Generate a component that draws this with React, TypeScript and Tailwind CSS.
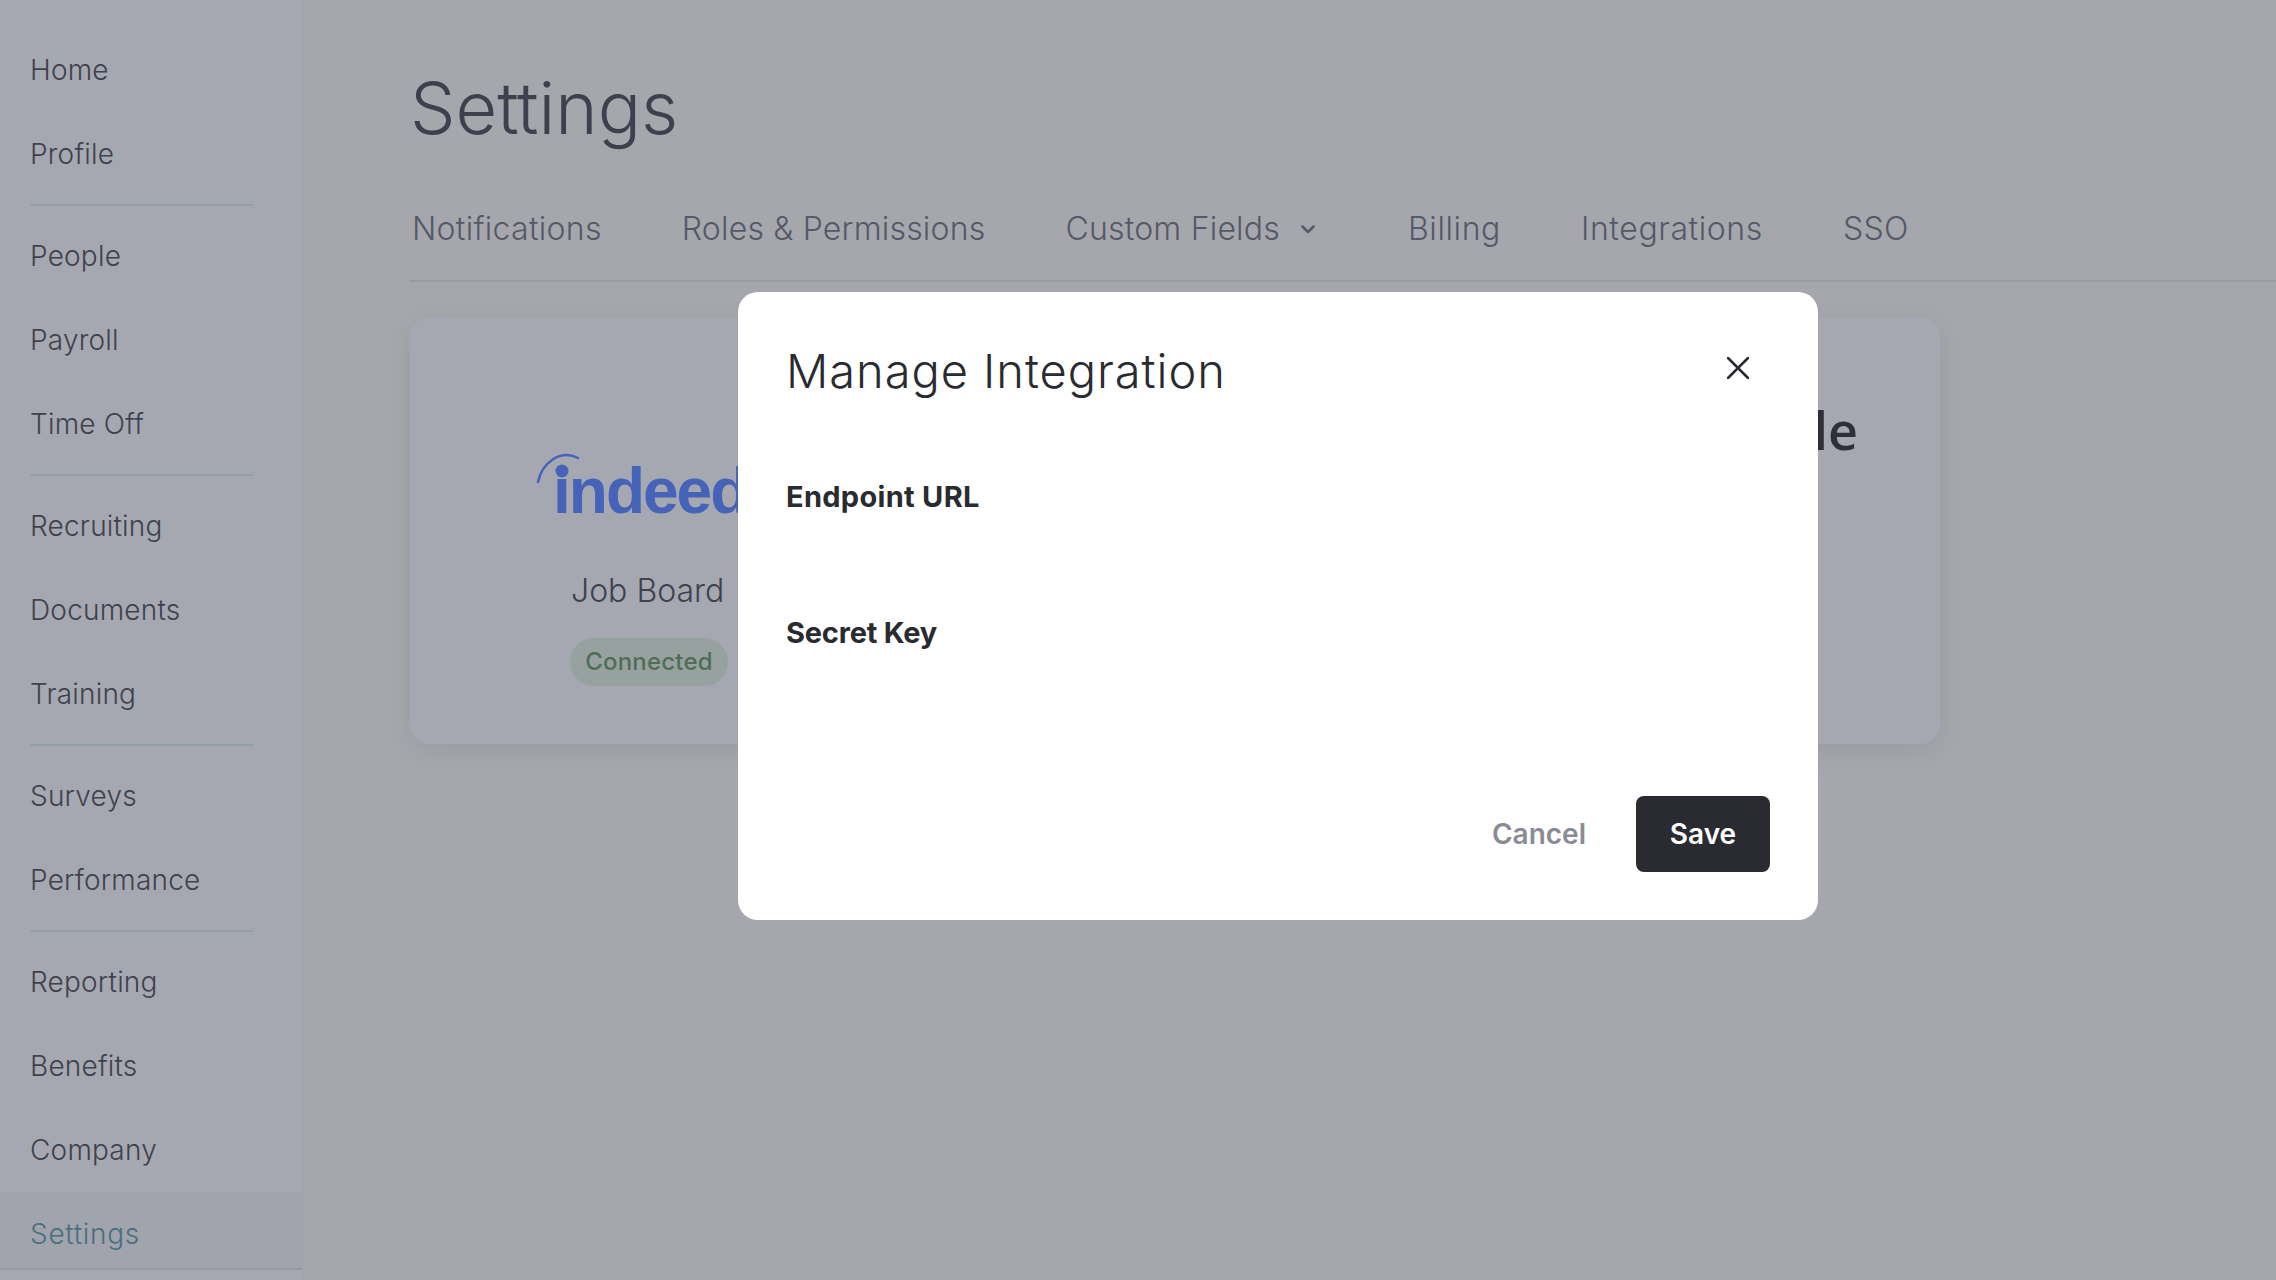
const navGroups = [
  ["Home", "Profile"],
  ["People", "Payroll", "Time Off"],
  ["Recruiting", "Documents", "Training"],
  ["Surveys", "Performance"],
  ["Reporting", "Benefits", "Company"],
];

const tabs = [
  { label: "Notifications", spacing: "tracking-[0.3px]" },
  { label: "Roles & Permissions", spacing: "tracking-[0.2px]" },
  { label: "Custom Fields", spacing: "tracking-[0.2px]" },
  { label: "Billing", spacing: "tracking-[0.6px]" },
  { label: "Integrations", spacing: "tracking-[0.6px]" },
  { label: "SSO", spacing: "tracking-[0.3px]" },
];

function Sidebar() {
  return (
    <aside className="w-[303px] shrink-0 h-full bg-[#a5a8b1] border-r border-[#a1a3a9] pt-[28px]">
      {navGroups.map((group, i) => (
        <div key={group[0]}>
          {group.map((label) => (
            <div key={label} className="h-[84px] flex items-center pl-[30px] text-[28px] tracking-[0.2px] font-light text-[#3f424d]">
              {label}
            </div>
          ))}
          {i < navGroups.length - 1 && <div className="ml-[30px] w-[224px] h-[2px] my-[8px] bg-[#96a1a7]" />}
        </div>
      ))}
      <div className="h-[78px] border-b-2 border-[#979aa4] bg-[#a1a4ac] pl-[30px] pt-[21px] leading-[42px] text-[28px] tracking-[0.7px] font-light text-[#48707e]">
        Settings
      </div>
    </aside>
  );
}

function Tabs() {
  return (
    <div className="h-[77px] pl-[2px] border-b-2 border-[#9a9ba0] flex items-start gap-[80px] text-[32px] font-light text-[#555967]">
      {tabs.map((tab) => (
        <div key={tab.label} className={`flex items-center leading-[48px] whitespace-nowrap ${tab.spacing}`}>
          {tab.label}
          {tab.label === "Custom Fields" && (
            <svg className="ml-[20px] mr-[12px]" width="16" height="16" viewBox="0 0 16 16" fill="none" stroke="#555967" strokeWidth="2.5" strokeLinecap="round" strokeLinejoin="round">
              <path d="M2.5 5.5 8 11l5.5-5.5" />
            </svg>
          )}
        </div>
      ))}
    </div>
  );
}

function IndeedLogo() {
  return (
    <div className="relative h-[72px] w-[260px]">
      <span className="absolute left-[15px] top-[-7px] text-[64px] leading-[90px] tracking-[-2px] font-bold text-[#4563b8] [font-family:'Liberation_Sans',sans-serif]">
        indeed
      </span>
      <svg className="absolute left-[-2px] top-[-4px]" width="50" height="40" viewBox="0 0 50 40" fill="none">
        <path d="M2 33C6 14 24 0 42 9" stroke="#4563b8" strokeWidth="2.5" strokeLinecap="round" />
        <circle cx="26" cy="22" r="6.5" fill="#4563b8" />
      </svg>
    </div>
  );
}

function IntegrationCard() {
  return (
    <div className="mt-[35px] h-[427px] w-[1530px] rounded-[20px] bg-[#a5a8b1] shadow-[0_6px_28px_rgba(0,0,0,0.07)] flex justify-between overflow-hidden">
      <div className="ml-[128px] mt-[136px] flex flex-col items-start">
        <IndeedLogo />
        <div className="mt-[42px] ml-[33px] text-[32px] leading-[48px] font-light text-[#3f424d]">Job Board</div>
        <div className="mt-[23px] ml-[32px] h-[48px] w-[158px] rounded-full bg-[#97a2a0] flex items-center justify-center text-[24px] tracking-[0.2px] font-medium text-[#4f6e58]">
          Connected
        </div>
      </div>
      <div className="mr-[82px] mt-[78px] h-[70px] text-[52px] leading-[70px] font-semibold text-[#2e3039] [font-family:'Open_Sans',sans-serif]">
        Simple
      </div>
    </div>
  );
}

function ManageModal() {
  return (
    <div className="absolute left-[738px] top-[292px] w-[1080px] h-[628px] rounded-[20px] bg-white px-[48px] flex flex-col">
      <div className="flex items-start justify-between pt-[48px]">
        <h2 className="text-[47px] leading-[62px] font-light tracking-[0.95px] text-[#2a2b30]">Manage Integration</h2>
        <svg className="mt-[17px] mr-[21px]" width="22" height="22" viewBox="0 0 22 22" fill="none" stroke="#2a2b30" strokeWidth="2.5" strokeLinecap="round">
          <path d="M1 1l20 20M21 1 1 21" />
        </svg>
      </div>
      <div className="mt-[75px] text-[29px] leading-[40px] tracking-[0.3px] font-bold text-[#2a2b30]">Endpoint URL</div>
      <div className="mt-[96px] text-[29px] leading-[40px] tracking-[-0.2px] font-bold text-[#2a2b30]">Secret Key</div>
      <div className="mt-auto mb-[48px] flex items-center justify-end gap-[50px]">
        <button className="text-[28px] font-semibold text-[#8a8c94]">Cancel</button>
        <button className="w-[134px] h-[76px] rounded-[8px] bg-[#2a2b30] text-[28px] font-semibold text-white">Save</button>
      </div>
    </div>
  );
}

export default function App() {
  return (
    <div className="relative h-screen w-full overflow-hidden flex bg-[#a6a7ac] [font-family:Inter,sans-serif]">
      <Sidebar />
      <main className="flex-1 pl-[107px] pt-[62px]">
        <h1 className="text-[72px] leading-[92px] font-light text-[#3e404d]">Settings</h1>
        <div className="mt-[51px]">
          <Tabs />
        </div>
        <IntegrationCard />
      </main>
      <ManageModal />
    </div>
  );
}
